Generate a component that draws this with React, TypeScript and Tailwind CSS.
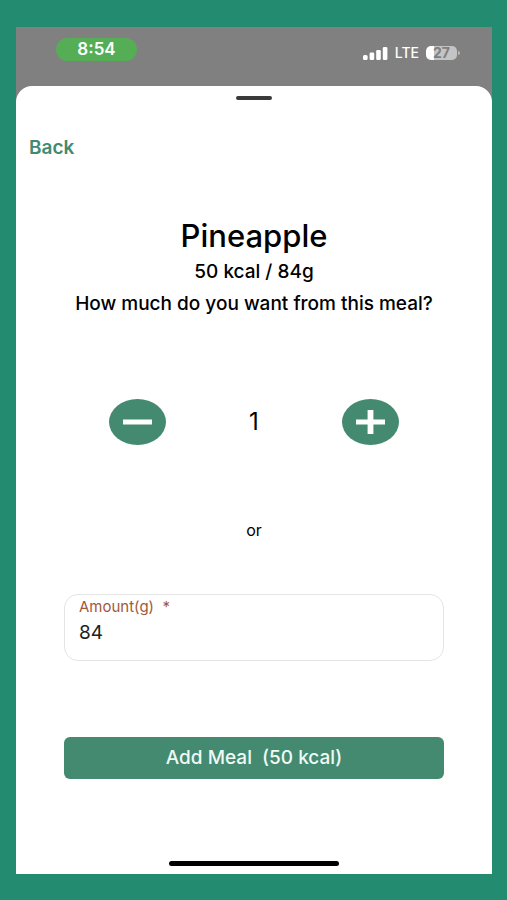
/**
 * Add Meal screen
 * @fileoverview Bottom sheet for choosing how much of a meal to add
 */

import React, { useState } from 'react';

const meal = { name: 'Pineapple', kcal: 50, grams: 84 };

/**
 * Status bar with clock, signal and battery
 */
const StatusBar: React.FC = () => (
  <header className="flex h-[59px] items-start justify-between pt-[11px] pr-8 pl-10 text-white">
    <span className="flex h-[23px] w-[81px] items-center justify-center rounded-full bg-[#55ae55] text-[17px] font-semibold">
      8:54
    </span>
    <div className="flex h-[30px] items-center gap-[7px]">
      <svg width="25" height="13" viewBox="0 0 25 13" fill="currentColor" aria-hidden="true">
        <rect x="0" y="8" width="4.6" height="5" rx="1.5" />
        <rect x="6.6" y="5.5" width="4.6" height="7.5" rx="1.3" />
        <rect x="13.2" y="3" width="4.6" height="10" rx="1.3" />
        <rect x="19.8" y="0" width="4.6" height="13" rx="1.3" />
      </svg>
      <span className="text-sm font-medium">LTE</span>
      <div className="flex items-center gap-px">
        <span className="flex h-[14px] w-[31px] items-center justify-center rounded-[5px] bg-linear-to-r from-white from-27% to-[#c4c4c4] to-27% text-sm font-bold text-[#808080]">
          27
        </span>
        <span className="h-1 w-[2px] rounded-r-full bg-[#b8b8b8]" />
      </div>
    </div>
  </header>
);

interface StepButtonProps {
  label: string;
  path: string;
  onClick: () => void;
}

/**
 * Round button that changes the number of servings
 */
const StepButton: React.FC<StepButtonProps> = ({ label, path, onClick }) => (
  <button
    type="button"
    aria-label={label}
    onClick={onClick}
    className="flex h-[46px] w-[57px] items-center justify-center rounded-[50%] bg-[#438a70]"
  >
    <svg width="29" height="24" viewBox="0 0 29 24" fill="white" aria-hidden="true">
      <path d={path} />
    </svg>
  </button>
);

const App: React.FC = () => {
  const [servings, setServings] = useState(1);
  const [amount, setAmount] = useState(String(meal.grams));

  const changeServings = (next: number) => {
    if (next < 1) return;
    setServings(next);
    setAmount(String(next * meal.grams));
  };

  const kcal = Math.round((Number(amount) / meal.grams) * meal.kcal);

  return (
    <div className="flex min-h-screen flex-col bg-[#228b70] pt-[27px] pr-[15px] pb-[26px] pl-4 font-['Inter',sans-serif] text-black">
      <div className="flex grow flex-col bg-[#808080]">
        <StatusBar />

        <main className="flex grow flex-col rounded-t-[16px] bg-white pt-[10px] pb-2">
          <div className="h-1 w-9 self-center rounded-full bg-[#3a3a3a]" />

          <button type="button" className="mt-9 ml-[13px] self-start text-[19px] leading-6 font-semibold text-[#438a70]">
            Back
          </button>

          <div className="mt-14 text-center text-[19px] leading-6 font-medium">
            <h1 className="text-[31px] leading-10">{meal.name}</h1>
            <p className="mt-1">
              {meal.kcal} kcal / {meal.grams}g
            </p>
            <p className="mt-2">How much do you want from this meal?</p>
          </div>

          <div className="mt-[83px] flex items-center justify-between px-[93px]">
            <StepButton
              label="Remove one serving"
              path="M0 9.5h29v5H0z"
              onClick={() => changeServings(servings - 1)}
            />
            <span className="text-2xl">{servings}</span>
            <StepButton
              label="Add one serving"
              path="M0 9.5h11.6V0h5.8v9.5H29v5H17.4V24h-5.8v-9.5H0z"
              onClick={() => changeServings(servings + 1)}
            />
          </div>

          <p className="mt-[73px] text-center text-base leading-6">or</p>

          <form className="mx-12 mt-[52px]" onSubmit={(e) => e.preventDefault()}>
            <div className="flex h-[67px] flex-col rounded-[14px] border border-[#e4e4e4] px-[14px] pt-1">
              <label htmlFor="amount" className="text-[15px] leading-4 text-[#a0593c]">
                Amount(g) &nbsp;*
              </label>
              <input
                id="amount"
                type="text"
                inputMode="numeric"
                required
                value={amount}
                onChange={(e) => setAmount(e.target.value)}
                className="mt-1 h-7 w-full text-[19px] text-[#222222] outline-none"
              />
            </div>

            <button
              type="submit"
              className="mt-[76px] h-[42px] w-full rounded-[6px] bg-[#438a70] text-[19px] font-medium whitespace-pre text-[#eefaf5]"
            >
              {`Add Meal  (${kcal} kcal)`}
            </button>
          </form>

          <div className="mt-auto h-[5px] w-[170px] self-center rounded-full bg-black" />
        </main>
      </div>
    </div>
  );
};

export default App;
